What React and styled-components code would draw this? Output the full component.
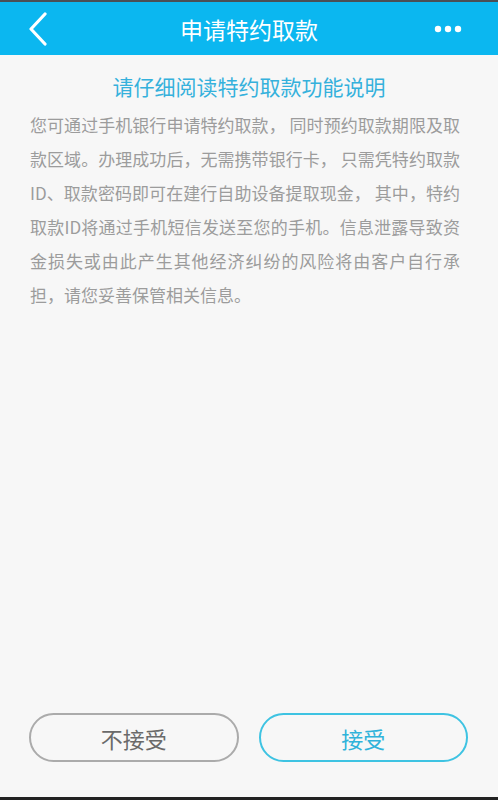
import React from "react";
import styled, { createGlobalStyle } from "styled-components";

const Global = createGlobalStyle`
  html, body { margin: 0; padding: 0; }
  body { font-family: "Noto Sans CJK SC", "Noto Sans", sans-serif; background: #f7f7f7; }
`;

const Page = styled.div`
  width: 498px;
  height: 800px;
  display: flex;
  flex-direction: column;
  background: #f7f7f7;
  overflow: hidden;
`;

const StatusStrip = styled.div`
  height: 2px;
  background: #4a4f55;
  flex: none;
`;

const Header = styled.header`
  height: 53px;
  flex: none;
  background: #0bb7f0;
  display: flex;
  align-items: center;
  justify-content: space-between;
  padding: 0 36px 0 27px;
  position: relative;
`;

const Title = styled.h1`
  position: absolute;
  left: 0;
  right: 0;
  top: 0;
  bottom: 0;
  margin: 0;
  display: flex;
  align-items: center;
  justify-content: center;
  color: #fff;
  font-size: 23px;
  font-weight: 400;
  pointer-events: none;
`;

const IconBtn = styled.div`
  display: flex;
  align-items: center;
  position: relative;
  z-index: 1;
`;

const Content = styled.main`
  flex: 1;
  padding: 16px 38px 0 30px;
`;

const Heading = styled.h2`
  margin: 0 0 7px 8px;
  text-align: center;
  color: #35b1dc;
  font-size: 21px;
  font-weight: 400;
  line-height: 30px;
`;

const Body = styled.p`
  margin: 0;
  color: #9c9c9c;
  font-size: 17px;
  line-height: 34px;
  text-align: justify;
`;

const Footer = styled.footer`
  flex: none;
  display: flex;
  gap: 20px;
  padding: 0 30px 35px 29px;
`;

const Button = styled.button`
  flex: 1;
  height: 49px;
  border-radius: 25px;
  background: transparent;
  border: 2px solid ${(p) => (p.$primary ? "#3ec3e2" : "#ababab")};
  color: ${(p) => (p.$primary ? "#30b3da" : "#6a6a6a")};
  font-family: inherit;
  font-size: 22px;
  padding: 0;
`;

const BottomStrip = styled.div`
  height: 3px;
  background: #222;
  flex: none;
`;

export default function App() {
  return (
    <Page>
      <Global />
      <StatusStrip />
      <Header>
        <IconBtn>
          <svg width="22" height="34" viewBox="0 0 22 34">
            <path d="M18 2 L4 17 L18 32" fill="none" stroke="#fff" strokeWidth="3.2" strokeLinecap="round" strokeLinejoin="round" />
          </svg>
        </IconBtn>
        <Title>申请特约取款</Title>
        <IconBtn>
          <svg width="28" height="8" viewBox="0 0 28 8">
            <circle cx="4" cy="4" r="3.2" fill="#fff" />
            <circle cx="14" cy="4" r="3.2" fill="#fff" />
            <circle cx="24" cy="4" r="3.2" fill="#fff" />
          </svg>
        </IconBtn>
      </Header>
      <Content>
        <Heading>请仔细阅读特约取款功能说明</Heading>
        <Body>
          您可通过手机银行申请特约取款， 同时预约取款期限及取款区域。办理成功后，无需携带银行卡， 只需凭特约取款ID、取款密码即可在建行自助设备提取现金， 其中，特约取款ID将通过手机短信发送至您的手机。信息泄露导致资金损失或由此产生其他经济纠纷的风险将由客户自行承担，请您妥善保管相关信息。
        </Body>
      </Content>
      <Footer>
        <Button>不接受</Button>
        <Button $primary>接受</Button>
      </Footer>
      <BottomStrip />
    </Page>
  );
}
